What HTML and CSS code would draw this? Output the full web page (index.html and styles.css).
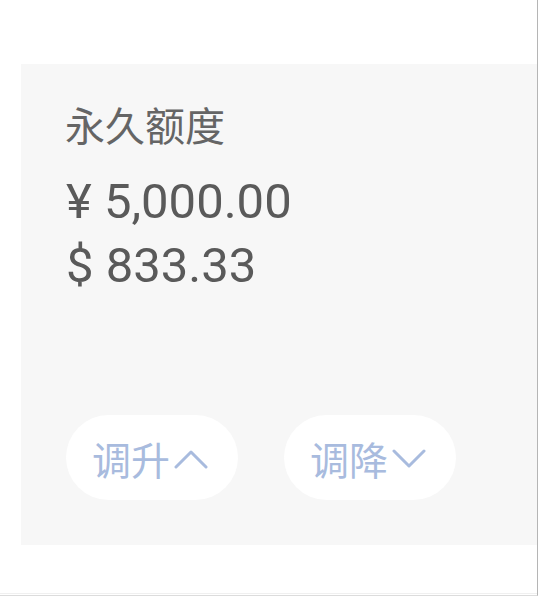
FILE: index.html
```html
<!DOCTYPE html>
<html lang="zh-CN">
<head>
<meta charset="utf-8">
<title>永久额度</title>
<link rel="stylesheet" href="styles.css">
</head>
<body>
<div class="page">
  <div class="card">
    <div class="title">永久额度</div>
    <div class="amounts">
      <div class="amount">¥ 5,000.00</div>
      <div class="amount">$ 833.33</div>
    </div>
    <div class="actions">
      <button class="pill">
        <span class="pill-text">调升</span>
        <svg class="chev" width="34" height="20" viewBox="0 0 34 20"><path d="M2 18 L17 3 L32 18" fill="none" stroke="#a8bbde" stroke-width="3" stroke-linecap="round" stroke-linejoin="round"/></svg>
      </button>
      <button class="pill">
        <span class="pill-text">调降</span>
        <svg class="chev" width="34" height="20" viewBox="0 0 34 20"><path d="M2 2 L17 17 L32 2" fill="none" stroke="#a8bbde" stroke-width="3" stroke-linecap="round" stroke-linejoin="round"/></svg>
      </button>
    </div>
  </div>
  <div class="bottom-rule"></div>
</div>
</body>
</html>
```
FILE: styles.css
```css
html, body {
  margin: 0;
  padding: 0;
  background: #ffffff;
}

.page {
  width: 538px;
  height: 596px;
  border-right: 1px solid #b5b5b5;
  border-bottom: 1px solid #dcdcdc;
  padding-top: 64px;
  box-sizing: border-box;
  display: flex;
  flex-direction: column;
}

.card {
  margin-left: 21px;
  height: 481px;
  background: #f7f7f7;
  padding: 36px 0 0 45px;
  box-sizing: border-box;
  display: flex;
  flex-direction: column;
}

.title {
  font-family: "Noto Sans CJK SC", "Roboto", sans-serif;
  font-size: 40px;
  line-height: 48px;
  color: #656565;
  margin-left: -1px;
}

.amounts {
  margin-top: 22px;
}

.amount {
  font-family: "Roboto", "Noto Sans CJK SC", sans-serif;
  font-size: 49px;
  line-height: 64px;
  color: #5a5a5a;
}

.actions {
  margin-top: 117px;
  display: flex;
  gap: 46px;
}

.pill {
  width: 172px;
  height: 85px;
  border: none;
  border-radius: 43px;
  background: #ffffff;
  padding: 0 0 0 26px;
  display: flex;
  align-items: center;
  gap: 4px;
  cursor: pointer;
}

.pill-text {
  font-family: "Noto Sans CJK SC", sans-serif;
  font-size: 39px;
  line-height: 48px;
  color: #a8bbde;
}

.chev {
  display: block;
  margin-top: 2px;
}

.bottom-rule {
  margin-top: auto;
  height: 1px;
  background: #f0f0f0;
  margin-bottom: 1px;
}
```
